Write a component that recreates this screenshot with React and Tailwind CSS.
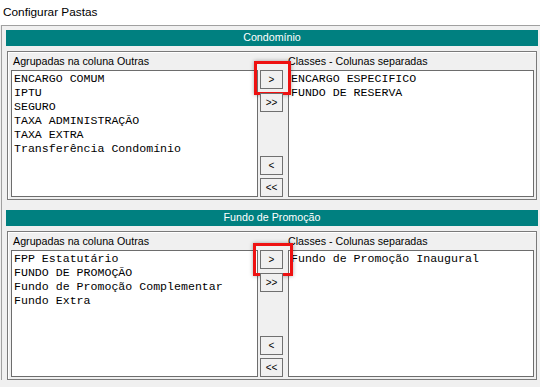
/**
 * ConfigurarPastas - folder configuration dialog
 *
 * Two sections (Condomínio / Fundo de Promoção), each with
 * "grouped" and "separate" lists and the move buttons between them.
 */

import React from 'react';

const SECTIONS = [
  {
    title: 'Condomínio',
    left: [
      'ENCARGO COMUM',
      'IPTU',
      'SEGURO',
      'TAXA ADMINISTRAÇÃO',
      'TAXA EXTRA',
      'Transferência Condomínio',
    ],
    right: ['ENCARGO ESPECIFICO', 'FUNDO DE RESERVA'],
    highlight: 'left-[-6px] top-[-9px] w-[37px] h-[34px]',
  },
  {
    title: 'Fundo de Promoção',
    left: [
      'FPP Estatutário',
      'FUNDO DE PROMOÇÃO',
      'Fundo de Promoção Complementar',
      'Fundo Extra',
    ],
    right: ['Fundo de Promoção Inaugural'],
    highlight: 'left-[-7px] top-[-7px] w-[40px] h-[33px]',
  },
];

const UI_FONT = "font-['Liberation_Sans',Arial,sans-serif]";

/**
 * Plain list box with monospaced items
 */
const ListBox = ({ items, className }) => (
  <div
    className={`h-[127px] bg-white border border-[#6d6d6d] pl-[2px] pt-[1px] font-['Liberation_Mono','Courier_New',monospace] text-[11.6px] leading-[14px] text-black ${className}`}
  >
    {items.map((item) => (
      <div key={item} className="whitespace-pre">
        {item}
      </div>
    ))}
  </div>
);

/**
 * Small move button (>, >>, <, <<)
 */
const MoveButton = ({ label, children }) => (
  <div className="relative">
    <button className="w-[23px] h-[19px] flex items-center justify-center bg-[#f0f0f0] border border-[#707070] text-[10px] leading-none text-black">
      {label}
    </button>
    {children}
  </div>
);

const Section = ({ section }) => (
  <div>
    {/* Teal header */}
    <div className="h-[16px] mr-[2px] bg-[#008080] text-white text-center text-[10.7px] leading-[15px]">
      {section.title}
    </div>

    {/* Group box */}
    <div className="mt-[5px] mx-[1px] mr-[3px] h-[149px] border border-[#7a7a7a] shadow-[inset_1px_1px_0_#ffffff] flex pl-[3px] pr-[2px]">
      <div className="w-[247px]">
        <div className="h-[18px] leading-[18px] text-[10.7px] pl-[2px] text-black">
          Agrupadas na coluna Outras
        </div>
        <ListBox items={section.left} />
      </div>

      <div className="ml-[2px] mr-[5px] pt-[18px] h-[145px] flex flex-col justify-between">
        <div className="flex flex-col gap-[4px]">
          <MoveButton label="&gt;">
            <div
              className={`absolute ${section.highlight} border-[3px] border-[#ee1111] shadow-[0_0_4px_rgba(0,0,0,0.35)] pointer-events-none`}
            />
          </MoveButton>
          <MoveButton label="&gt;&gt;" />
        </div>
        <div className="flex flex-col gap-[3px]">
          <MoveButton label="&lt;" />
          <MoveButton label="&lt;&lt;" />
        </div>
      </div>

      <div className="w-[246px]">
        <div className="h-[18px] leading-[18px] text-[10.7px] text-black">
          Classes - Colunas separadas
        </div>
        <ListBox items={section.right} />
      </div>
    </div>
  </div>
);

const App = () => {
  return (
    <div className={`w-[540px] h-[387px] bg-[#f0f0f0] overflow-hidden ${UI_FONT}`}>
      {/* Title */}
      <div className="h-[25px] bg-white pl-[3px] text-[11.8px] leading-[25px] text-black">
        Configurar Pastas
      </div>

      <div className="ml-[1px] border-t border-l border-[#a0a0a0] pt-[4px] pl-[4px] flex flex-col gap-[10px]">
        {SECTIONS.map((section) => (
          <Section key={section.title} section={section} />
        ))}
      </div>
    </div>
  );
};

export default App;
